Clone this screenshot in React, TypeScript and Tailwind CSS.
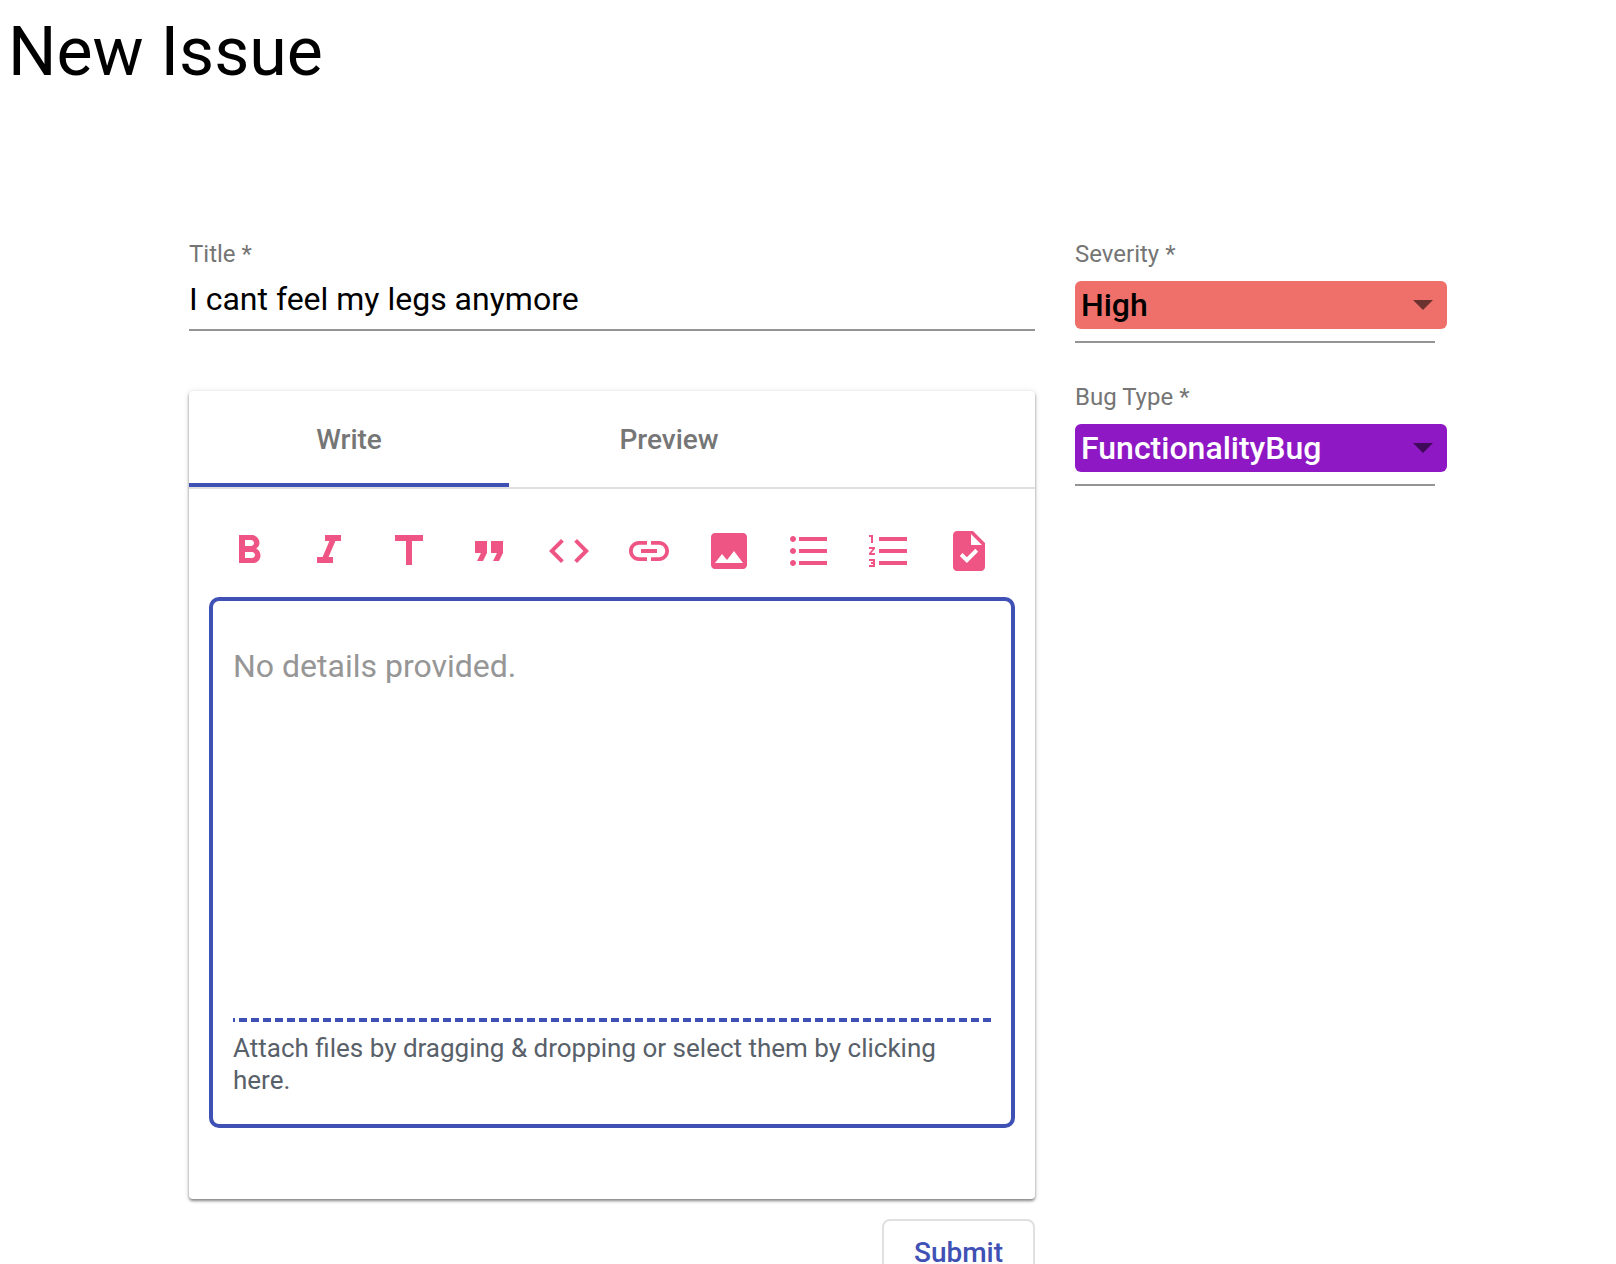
import { ReactNode } from 'react';
import {
  MdCode,
  MdFormatBold,
  MdFormatItalic,
  MdFormatListBulleted,
  MdFormatListNumbered,
  MdFormatQuote,
  MdImage,
  MdLink,
  MdTitle,
} from 'react-icons/md';

function TaskIcon({ className }: { className?: string }) {
  return (
    <svg viewBox="0 0 24 24" fill="currentColor" className={className}>
      <path d="M14 2H6c-1.1 0-1.99.9-1.99 2L4 20c0 1.1.89 2 1.99 2H18c1.1 0 2-.9 2-2V8l-6-6zm-3.06 16L7.4 14.46l1.41-1.41 2.12 2.12 4.24-4.24 1.41 1.41L10.94 18zM13 9V3.5L18.5 9H13z" />
    </svg>
  );
}

const toolbarIcons = [
  MdFormatBold,
  MdFormatItalic,
  MdTitle,
  MdFormatQuote,
  MdCode,
  MdLink,
  MdImage,
  MdFormatListBulleted,
  MdFormatListNumbered,
  TaskIcon,
];

function FieldLabel({ children }: { children: ReactNode }) {
  return <label className="block h-[28px] text-[24px] leading-[28px] text-[#757575]">{children}</label>;
}

function ColoredSelect({ label, value, boxClass }: { label: string; value: string; boxClass: string }) {
  return (
    <div>
      <FieldLabel>{label}</FieldLabel>
      <div className="mt-[13px] border-b-2 border-[#949494] w-[360px] pb-[10px] h-[62px]">
        <div className={`w-[372px] h-[48px] rounded-[6px] flex items-center justify-between pl-[6px] pr-[14px] text-[32px] font-medium leading-[48px] ${boxClass}`}>
          <span>{value}</span>
          <svg viewBox="0 0 20 10" className="w-[20px] h-[10px] opacity-55" fill="#000">
            <path d="M0 0h20L10 10z" />
          </svg>
        </div>
      </div>
    </div>
  );
}

export default function App() {
  return (
    <div className="h-[1264px] overflow-hidden bg-white text-black font-['Roboto',sans-serif]">
      <h1 className="h-[104px] pl-[8px] text-[68px] leading-[104px] font-normal">New Issue</h1>

      <div className="flex gap-[40px] pl-[189px] pt-[136px]">
        {/* Left column */}
        <div className="w-[846px] shrink-0">
          <FieldLabel>Title *</FieldLabel>
          <input
            defaultValue="I cant feel my legs anymore"
            className="block w-full mt-[6px] h-[57px] pb-[6px] border-b-2 border-[#949494] text-[32px] leading-[48px] outline-none bg-transparent"
          />

          <div className="mt-[60px] bg-white rounded-[4px] shadow-[0_2px_3px_rgba(0,0,0,0.45),0_0_6px_rgba(0,0,0,0.1)] pb-[71px]">
            <div className="flex h-[98px] border-b-2 border-[#e0e0e0]">
              <div className="w-[320px] h-[96px] pt-[6px] border-b-4 border-[#3f51b5] flex items-center justify-center text-[28px] font-medium text-[#767676]">
                Write
              </div>
              <div className="w-[320px] h-[96px] pt-[2px] flex items-center justify-center text-[28px] font-medium text-[#767676]">
                Preview
              </div>
            </div>

            <div className="flex gap-[32px] pl-[36px] pt-[38px] text-[#ef5584]">
              {toolbarIcons.map((Icon, i) => (
                <button key={i} className="w-[48px] h-[48px] shrink-0">
                  <Icon className="w-[48px] h-[48px]" />
                </button>
              ))}
            </div>

            <div className="mx-[20px] mt-[22px] h-[531px] border-4 border-[#3f51b5] rounded-[10px] flex flex-col">
              <textarea
                placeholder="No details provided."
                className="block w-full flex-1 resize-none outline-none pl-[20px] pr-[20px] pt-[41px] text-[32px] leading-[48px] placeholder:text-[#969696]"
              />
              <div className="mx-[20px] h-[4px] shrink-0 bg-[linear-gradient(90deg,transparent_4px,#3f51b5_4px)] bg-[length:12px_4px] bg-right" />
              <p className="px-[20px] pt-[10px] pb-[28px] text-[26px] leading-[32px] text-[#586069]">
                Attach files by dragging &amp; dropping or select them by clicking here.
              </p>
            </div>
          </div>

          <div className="flex justify-end mt-[20px]">
            <button className="w-[153px] h-[68px] border-2 border-[#e0e0e0] rounded-[8px] text-[28px] font-medium text-[#3f51b5]">
              Submit
            </button>
          </div>
        </div>

        {/* Right column */}
        <div className="w-[372px] shrink-0 flex flex-col gap-[40px]">
          <ColoredSelect label="Severity *" value="High" boxClass="bg-[#ef706a] text-black" />
          <ColoredSelect label="Bug Type *" value="FunctionalityBug" boxClass="bg-[#8e18c4] text-white" />
        </div>
      </div>
    </div>
  );
}
